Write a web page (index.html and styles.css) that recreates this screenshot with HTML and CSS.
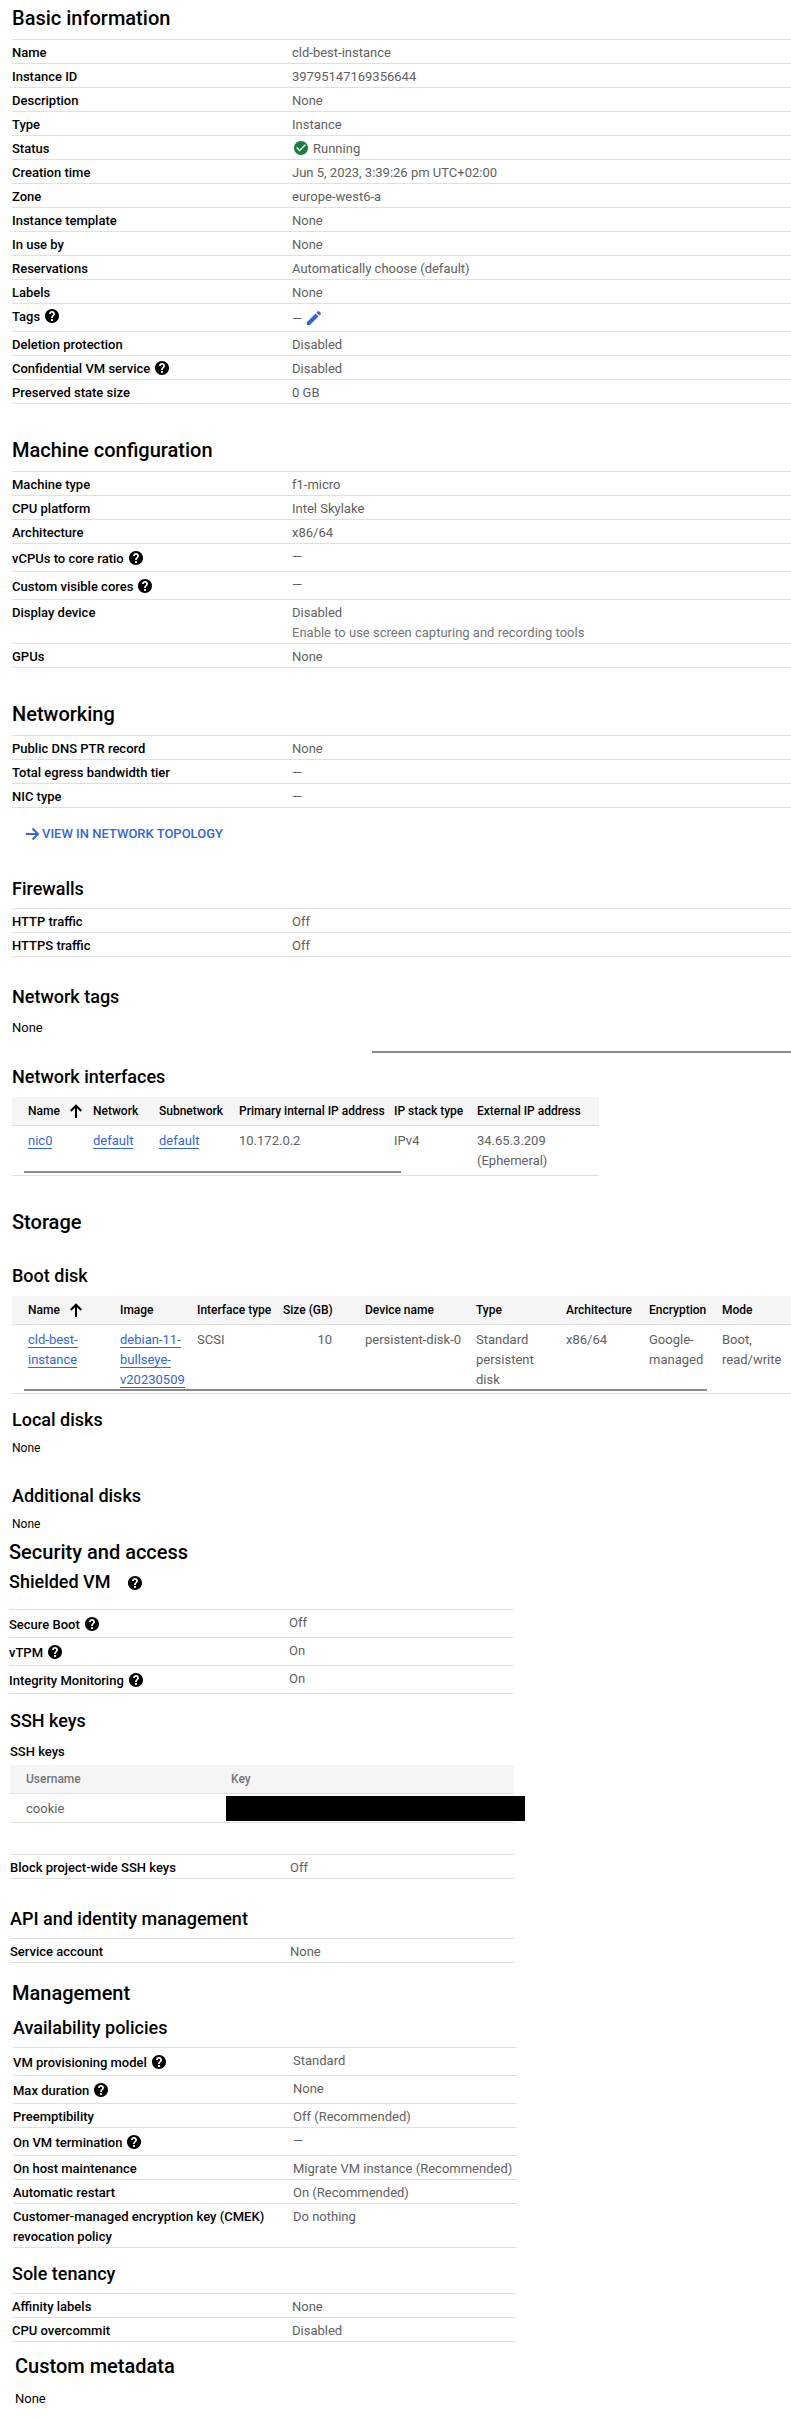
FILE: index.html
```html
<!DOCTYPE html>
<html lang="en">
<head>
<meta charset="utf-8">
<meta name="viewport" content="width=device-width, initial-scale=1">
<title>cld-best-instance</title>
<link rel="stylesheet" href="styles.css">
</head>
<body>
<svg class="sprite" aria-hidden="true">
  <symbol id="help" viewBox="2 2 20 20"><path fill="currentColor" d="M12 2C6.48 2 2 6.48 2 12s4.48 10 10 10 10-4.48 10-10S17.52 2 12 2zm1.300 17h-2.600v-2.600h2.600V19zm2.100-7.750l-.9.920C13.700 12.900 13.300 13.500 13.300 15h-2.600v-.5c0-1.100.4-2.100 1.100-2.830l1.240-1.260c.37-.36.590-.860.590-1.410 0-1.100-.7-1.700-1.630-1.700S10.300 8 10.300 9H7.800c0-2.210 1.990-4.100 4.200-4.100s4.200 1.790 4.200 4c0 .88-.360 1.800-.800 2.350z"/></symbol>
  <symbol id="arrow" viewBox="0 0 14 14"><path fill="none" stroke="currentColor" stroke-width="2" d="M0 7h12M6.500 1.500L12 7l-5.500 5.500"/></symbol>
  <symbol id="arrow-up" viewBox="0 0 14 14"><path fill="none" stroke="currentColor" stroke-width="2" d="M6 14V2M.7 7L6 1.700 11.300 7"/></symbol>
  <symbol id="pencil" viewBox="3 3 18 18"><path fill="currentColor" d="M3 17.250V21h3.750L17.810 9.940l-3.750-3.750L3 17.250zM20.710 7.040a1 1 0 0 0 0-1.410l-2.340-2.340a1 1 0 0 0-1.410 0l-1.830 1.830 3.750 3.750 1.830-1.830z"/></symbol>
  <symbol id="check" viewBox="2 2 20 20"><path fill="currentColor" d="M12 2C6.480 2 2 6.480 2 12s4.480 10 10 10 10-4.480 10-10S17.520 2 12 2zm-2 15l-5-5 1.410-1.410L10 14.170l7.590-7.590L19 8l-9 9z"/></symbol>
</svg>
<main>
  <section class="basic">
    <h2>Basic information</h2>
    <dl>
      <div><dt>Name</dt><dd>cld-best-instance</dd></div>
      <div><dt>Instance ID</dt><dd>39795147169356644</dd></div>
      <div><dt>Description</dt><dd>None</dd></div>
      <div><dt>Type</dt><dd>Instance</dd></div>
      <div><dt>Status</dt><dd><svg class="icon status"><use href="#check"/></svg>Running</dd></div>
      <div><dt>Creation time</dt><dd>Jun 5, 2023, 3:39:26 pm UTC+02:00</dd></div>
      <div><dt>Zone</dt><dd>europe-west6-a</dd></div>
      <div><dt>Instance template</dt><dd>None</dd></div>
      <div><dt>In use by</dt><dd>None</dd></div>
      <div><dt>Reservations</dt><dd>Automatically choose (default)</dd></div>
      <div><dt>Labels</dt><dd>None</dd></div>
      <div><dt>Tags<button class="help" aria-label="About tags"><svg class="icon"><use href="#help"/></svg></button></dt><dd class="tall">—<button class="edit" aria-label="Edit tags"><svg class="icon"><use href="#pencil"/></svg></button></dd></div>
      <div><dt>Deletion protection</dt><dd>Disabled</dd></div>
      <div><dt>Confidential VM service<button class="help" aria-label="About Confidential VM service"><svg class="icon"><use href="#help"/></svg></button></dt><dd>Disabled</dd></div>
      <div><dt>Preserved state size</dt><dd>0 GB</dd></div>
    </dl>
  </section>

  <section class="major">
    <h2>Machine configuration</h2>
    <dl>
      <div><dt>Machine type</dt><dd>f1-micro</dd></div>
      <div><dt>CPU platform</dt><dd>Intel Skylake</dd></div>
      <div><dt>Architecture</dt><dd>x86/64</dd></div>
      <div><dt class="tall">vCPUs to core ratio<button class="help" aria-label="About vCPUs to core ratio"><svg class="icon"><use href="#help"/></svg></button></dt><dd>—</dd></div>
      <div><dt class="tall">Custom visible cores<button class="help" aria-label="About custom visible cores"><svg class="icon"><use href="#help"/></svg></button></dt><dd>—</dd></div>
      <div><dt>Display device</dt><dd>Disabled<p class="hint">Enable to use screen capturing and recording tools</p></dd></div>
      <div><dt>GPUs</dt><dd>None</dd></div>
    </dl>
  </section>

  <section class="major">
    <h2>Networking</h2>
    <dl>
      <div><dt>Public DNS PTR record</dt><dd>None</dd></div>
      <div><dt>Total egress bandwidth tier</dt><dd>—</dd></div>
      <div><dt>NIC type</dt><dd>—</dd></div>
    </dl>
    <a class="topology" href="#topology"><svg class="icon"><use href="#arrow"/></svg>VIEW IN NETWORK TOPOLOGY</a>
  </section>

  <section class="firewalls">
    <h3>Firewalls</h3>
    <dl>
      <div><dt>HTTP traffic</dt><dd>Off</dd></div>
      <div><dt>HTTPS traffic</dt><dd>Off</dd></div>
    </dl>
  </section>

  <section class="network-tags">
    <h3>Network tags</h3>
    <p class="empty">None</p>
    <div class="divider"></div>
  </section>

  <section class="interfaces">
    <h3>Network interfaces</h3>
    <div class="table-box">
      <table class="nic-table">
        <colgroup><col class="w81"><col class="w66"><col class="w80"><col class="w155"><col class="w83"><col></colgroup>
        <thead><tr><th>Name<svg class="icon sort"><use href="#arrow-up"/></svg></th><th>Network</th><th>Subnetwork</th><th>Primary internal IP address</th><th>IP stack type</th><th>External IP address</th></tr></thead>
        <tbody><tr><td><a href="#nic0">nic0</a></td><td><a href="#network">default</a></td><td><a href="#subnetwork">default</a></td><td>10.172.0.2</td><td>IPv4</td><td>34.65.3.209 (Ephemeral)</td></tr></tbody>
      </table>
      <div class="scrollbar nic-scroll"></div>
    </div>
  </section>

  <section class="major storage">
    <h2>Storage</h2>
    <h3>Boot disk</h3>
    <div class="table-box">
      <table class="disk-table">
        <colgroup><col class="w108"><col class="w77"><col class="w86"><col class="w82"><col class="w111"><col class="w90"><col class="w83"><col class="w73"><col></colgroup>
        <thead><tr><th>Name<svg class="icon sort"><use href="#arrow-up"/></svg></th><th>Image</th><th>Interface type</th><th class="num">Size (GB)</th><th>Device name</th><th>Type</th><th>Architecture</th><th>Encryption</th><th>Mode</th></tr></thead>
        <tbody><tr><td><a href="#disk">cld-best-instance</a></td><td><a href="#image">debian-11-bullseye-v20230509</a></td><td>SCSI</td><td class="num">10</td><td>persistent-disk-0</td><td>Standard persistent disk</td><td>x86/64</td><td>Google-managed</td><td>Boot, read/write</td></tr></tbody>
      </table>
      <div class="scrollbar disk-scroll"></div>
    </div>
  </section>

  <section class="local">
    <h3>Local disks</h3>
    <p class="empty small">None</p>
  </section>
  <section class="additional">
    <h3>Additional disks</h3>
    <p class="empty small">None</p>
  </section>

  <section class="security">
    <h2>Security and access</h2>
    <h3>Shielded VM<button class="help" aria-label="About Shielded VM"><svg class="icon"><use href="#help"/></svg></button></h3>
    <dl>
      <div><dt class="tall">Secure Boot<button class="help" aria-label="About Secure Boot"><svg class="icon"><use href="#help"/></svg></button></dt><dd>Off</dd></div>
      <div><dt class="tall">vTPM<button class="help" aria-label="About vTPM"><svg class="icon"><use href="#help"/></svg></button></dt><dd>On</dd></div>
      <div><dt class="tall">Integrity Monitoring<button class="help" aria-label="About Integrity Monitoring"><svg class="icon"><use href="#help"/></svg></button></dt><dd>On</dd></div>
    </dl>
  </section>

  <section class="ssh">
    <h3>SSH keys</h3>
    <table class="key-table">
      <caption>SSH keys</caption>
      <thead><tr><th>Username</th><th>Key</th></tr></thead>
      <tbody><tr><td>cookie</td><td><div class="redacted"></div></td></tr></tbody>
    </table>
    <dl>
      <div><dt>Block project-wide SSH keys</dt><dd>Off</dd></div>
    </dl>
  </section>

  <section class="api">
    <h3>API and identity management</h3>
    <dl>
      <div><dt>Service account</dt><dd>None</dd></div>
    </dl>
  </section>

  <section class="management">
    <h2>Management</h2>
  </section>
  <section class="policies">
    <h3>Availability policies</h3>
    <dl>
      <div><dt class="tall">VM provisioning model<button class="help" aria-label="About VM provisioning model"><svg class="icon"><use href="#help"/></svg></button></dt><dd>Standard</dd></div>
      <div><dt class="tall">Max duration<button class="help" aria-label="About max duration"><svg class="icon"><use href="#help"/></svg></button></dt><dd>None</dd></div>
      <div><dt>Preemptibility</dt><dd>Off (Recommended)</dd></div>
      <div><dt class="tall">On VM termination<button class="help" aria-label="About VM termination"><svg class="icon"><use href="#help"/></svg></button></dt><dd>—</dd></div>
      <div><dt>On host maintenance</dt><dd>Migrate VM instance (Recommended)</dd></div>
      <div><dt>Automatic restart</dt><dd>On (Recommended)</dd></div>
      <div><dt>Customer-managed encryption key (CMEK) revocation policy</dt><dd>Do nothing</dd></div>
    </dl>
  </section>

  <section class="tenancy">
    <h3>Sole tenancy</h3>
    <dl>
      <div><dt>Affinity labels</dt><dd>None</dd></div>
      <div><dt>CPU overcommit</dt><dd>Disabled</dd></div>
    </dl>
  </section>

  <section class="metadata">
    <h2>Custom metadata</h2>
    <p class="empty">None</p>
  </section>
</main>
</body>
</html>
```
FILE: styles.css
```css
* { box-sizing: border-box; }

body {
  margin: 0;
  background: #fff;
  color: #000;
  font: 13px/20px Roboto, sans-serif;
}

.sprite { display: none; }

main {
  display: flow-root;
  padding-bottom: 9px;
}

section { margin-left: 12px; }

h2, h3, p, dl, dd { margin: 0; }

h2, h3 {
  font-weight: 500;
  line-height: 24px;
}
h2 { font-size: 20px; margin-bottom: 9px; }
h3 { font-size: 18px; margin-bottom: 8px; }

/* property lists */
dl { border-top: 1px solid #e0e0e0; }
dl > div {
  display: grid;
  grid-template-columns: 280px 1fr;
  padding-top: 3px;
  border-bottom: 1px solid #e0e0e0;
}
dt { font-weight: 500; }
dd { color: #616161; }
.tall { line-height: 24px; }
.hint { color: #757575; }

a { color: #3367d6; text-decoration: none; }

.icon {
  width: 14px;
  height: 14px;
  vertical-align: -2px;
}
.help, .edit {
  margin: 0 0 0 5px;
  padding: 0;
  border: 0;
  background: none;
  color: inherit;
  font: inherit;
  line-height: 14px;
}
.edit { color: #3367d6; }
.status { color: #188038; margin: 0 5px 0 2px; }
.sort { margin-left: 10px; vertical-align: -3px; }

/* tables */
.table-box { position: relative; }
table {
  border-collapse: separate;
  border-spacing: 0;
  table-layout: fixed;
  width: 100%;
}
th, td {
  border-bottom: 1px solid #e0e0e0;
  padding: 5px 8px 3px 0;
  text-align: left;
  vertical-align: top;
}
th {
  background: #f5f5f5;
  font-size: 12px;
  font-weight: 500;
  padding: 4px 0;
  white-space: nowrap;
}
th:first-child, td:first-child { padding-left: 16px; }
td { color: #616161; }
td a { border-bottom: 1px solid #3367d6; }
th.num, td.num { text-align: right; padding-right: 33px; }

.w66 { width: 66px; }
.w73 { width: 73px; }
.w77 { width: 77px; }
.w80 { width: 80px; }
.w81 { width: 81px; }
.w82 { width: 82px; }
.w83 { width: 83px; }
.w86 { width: 86px; }
.w90 { width: 90px; }
.w108 { width: 108px; }
.w111 { width: 111px; }
.w155 { width: 155px; }

.nic-table { max-width: 587px; }
.nic-table td { padding-bottom: 4px; }

.divider, .scrollbar {
  height: 2px;
  background: #8a8a8a;
}
.divider { margin: 13px 0 0 360px; }
.scrollbar {
  position: absolute;
  left: 12px;
  bottom: 3px;
}
.nic-scroll { width: 377px; }
.disk-scroll { width: 683px; }

.small { font-size: 12px; }

/* vertical rhythm */
.basic { padding-top: 6px; }
.major { margin-top: 34px; }
.topology {
  display: flex;
  align-items: center;
  gap: 2px;
  width: fit-content;
  margin: 16px 0 0 14px;
  font-weight: 500;
}
.firewalls { margin-top: 33px; }
.network-tags { margin-top: 28px; }
.network-tags h3 { margin-bottom: 9px; }
.interfaces { margin-top: 12px; }
.storage h2 { margin-bottom: 30px; }
.local { margin-top: 14px; }
.additional { margin-top: 26px; }
.local h3, .additional h3 { margin-bottom: 6px; }

/* narrow column */
.security, .ssh, .api, .policies, .tenancy { max-width: 504px; }
.security {
  margin-left: 9px;
  margin-top: 6px;
}
.security h2 { margin-bottom: 6px; }
.security h3 { margin-bottom: 15px; }
.security h3 .help { margin-left: 18px; }
.ssh, .api { margin-left: 10px; }
.ssh { margin-top: 15px; }
.ssh h3 { margin-bottom: 9px; }
.ssh dl { margin-top: 31px; }

.key-table caption {
  text-align: left;
  font-weight: 500;
  padding-bottom: 3px;
}
.key-table th { color: #757575; }
.key-table th:first-child { width: 221px; }
.key-table td:last-child { padding: 2px 0 1px; }
.redacted {
  height: 25px;
  margin: 0 -11px 0 -5px;
  background: #000;
}

.api { margin-top: 28px; }
.firewalls h3, .api h3, .policies h3, .tenancy h3 { margin-bottom: 7px; }
.management { margin-top: 18px; }
.management h2 { margin-bottom: 0; }
.policies { margin: 11px 0 0 13px; }
.tenancy { margin-top: 14px; }
.metadata { margin: 12px 0 0 15px; }
.metadata h2 { margin-bottom: 11px; }
```
